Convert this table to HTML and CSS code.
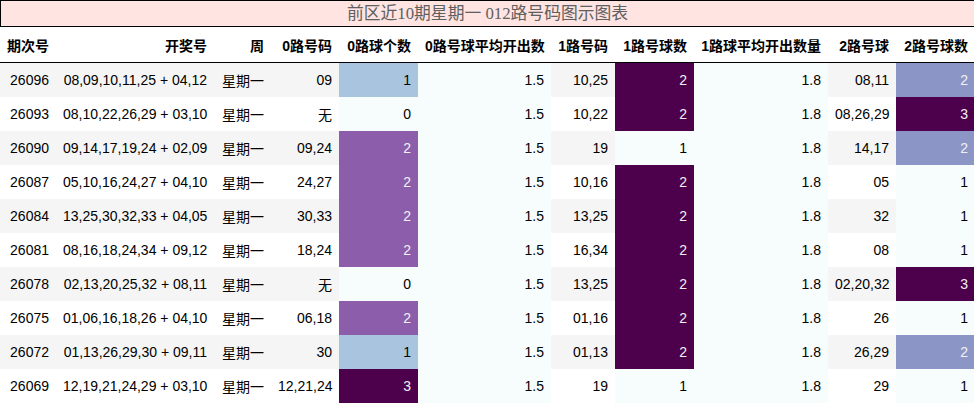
FILE: index.html
```html
<!DOCTYPE html>
<html lang="zh">
<head>
<meta charset="utf-8">
<title>012路号码图示图表</title>
<link rel="stylesheet" href="styles.css">
</head>
<body>
<table class="chart">
<caption class="chart-title">前区近10期星期一 012路号码图示图表</caption>
<colgroup>
<col class="w-issue"><col class="w-draw"><col class="w-week"><col class="w-code"><col class="w-count"><col class="w-avg"><col class="w-code1"><col class="w-count"><col class="w-avg1"><col class="w-code"><col class="w-count">
</colgroup>
<thead>
<tr>
<th>期次号</th><th>开奖号</th><th>周</th><th>0路号码</th><th>0路球个数</th><th>0路号球平均开出数</th><th>1路号码</th><th>1路号球数</th><th>1路球平均开出数量</th><th>2路号球</th><th>2路号球数</th>
</tr>
</thead>
<tbody>
<tr><td>26096</td><td>08,09,10,11,25 + 04,12</td><td>星期一</td><td>09</td><td class="a1">1</td><td class="lo">1.5</td><td>10,25</td><td class="b2">2</td><td class="lo">1.8</td><td>08,11</td><td class="c2">2</td></tr>
<tr><td>26093</td><td>08,10,22,26,29 + 03,10</td><td>星期一</td><td>无</td><td class="lo">0</td><td class="lo">1.5</td><td>10,22</td><td class="b2">2</td><td class="lo">1.8</td><td>08,26,29</td><td class="hi">3</td></tr>
<tr><td>26090</td><td>09,14,17,19,24 + 02,09</td><td>星期一</td><td>09,24</td><td class="a2">2</td><td class="lo">1.5</td><td>19</td><td class="lo">1</td><td class="lo">1.8</td><td>14,17</td><td class="c2">2</td></tr>
<tr><td>26087</td><td>05,10,16,24,27 + 04,10</td><td>星期一</td><td>24,27</td><td class="a2">2</td><td class="lo">1.5</td><td>10,16</td><td class="b2">2</td><td class="lo">1.8</td><td>05</td><td class="lo">1</td></tr>
<tr><td>26084</td><td>13,25,30,32,33 + 04,05</td><td>星期一</td><td>30,33</td><td class="a2">2</td><td class="lo">1.5</td><td>13,25</td><td class="b2">2</td><td class="lo">1.8</td><td>32</td><td class="lo">1</td></tr>
<tr><td>26081</td><td>08,16,18,24,34 + 09,12</td><td>星期一</td><td>18,24</td><td class="a2">2</td><td class="lo">1.5</td><td>16,34</td><td class="b2">2</td><td class="lo">1.8</td><td>08</td><td class="lo">1</td></tr>
<tr><td>26078</td><td>02,13,20,25,32 + 08,11</td><td>星期一</td><td>无</td><td class="lo">0</td><td class="lo">1.5</td><td>13,25</td><td class="b2">2</td><td class="lo">1.8</td><td>02,20,32</td><td class="hi">3</td></tr>
<tr><td>26075</td><td>01,06,16,18,26 + 04,10</td><td>星期一</td><td>06,18</td><td class="a2">2</td><td class="lo">1.5</td><td>01,16</td><td class="b2">2</td><td class="lo">1.8</td><td>26</td><td class="lo">1</td></tr>
<tr><td>26072</td><td>01,13,26,29,30 + 09,11</td><td>星期一</td><td>30</td><td class="a1">1</td><td class="lo">1.5</td><td>01,13</td><td class="b2">2</td><td class="lo">1.8</td><td>26,29</td><td class="c2">2</td></tr>
<tr><td>26069</td><td>12,19,21,24,29 + 03,10</td><td>星期一</td><td>12,21,24</td><td class="hi">3</td><td class="lo">1.5</td><td>19</td><td class="lo">1</td><td class="lo">1.8</td><td>29</td><td class="lo">1</td></tr>
</tbody>
</table>
</body>
</html>
```

FILE: styles.css
```css
html, body {
  margin: 0;
  padding: 0;
  background: #ffffff;
}

.chart {
  width: 974px;
  table-layout: fixed;
  border-collapse: separate;
  border-spacing: 0;
  font-family: "Liberation Sans", "Noto Sans CJK SC", sans-serif;
  font-size: 14px;
  color: #000000;
}

.chart-title {
  box-sizing: border-box;
  height: 27px;
  line-height: 25px;
  border: 1px solid #000000;
  background: #ffe4e1;
  color: #606060;
  font-family: "Liberation Serif", "Noto Sans CJK SC", serif;
  font-size: 16.8px;
  text-align: center;
  white-space: nowrap;
}

.w-issue { width: 56px; }
.w-draw { width: 158px; }
.w-week { width: 57px; }
.w-code { width: 68px; }
.w-count { width: 79px; }
.w-avg { width: 133px; }
.w-code1 { width: 64px; }
.w-avg1 { width: 134px; }

.chart th,
.chart td {
  padding: 0 7px;
  text-align: right;
  vertical-align: middle;
  white-space: nowrap;
  overflow: hidden;
}

.chart th {
  height: 35px;
  font-weight: bold;
  border-bottom: 1px solid #000000;
}

.chart td {
  height: 34px;
}

.chart tbody tr:nth-child(odd) td {
  background: #f5f5f5;
}

.chart tbody tr td.lo { background: #f7fcfd; color: #000000; }
.chart tbody tr td.a1 { background: #a9c4de; color: #000000; }
.chart tbody tr td.a2 { background: #8b5daa; color: #f1f1f1; }
.chart tbody tr td.c2 { background: #8c96c6; color: #f1f1f1; }
.chart tbody tr td.b2,
.chart tbody tr td.hi { background: #4d004b; color: #f1f1f1; }
```
